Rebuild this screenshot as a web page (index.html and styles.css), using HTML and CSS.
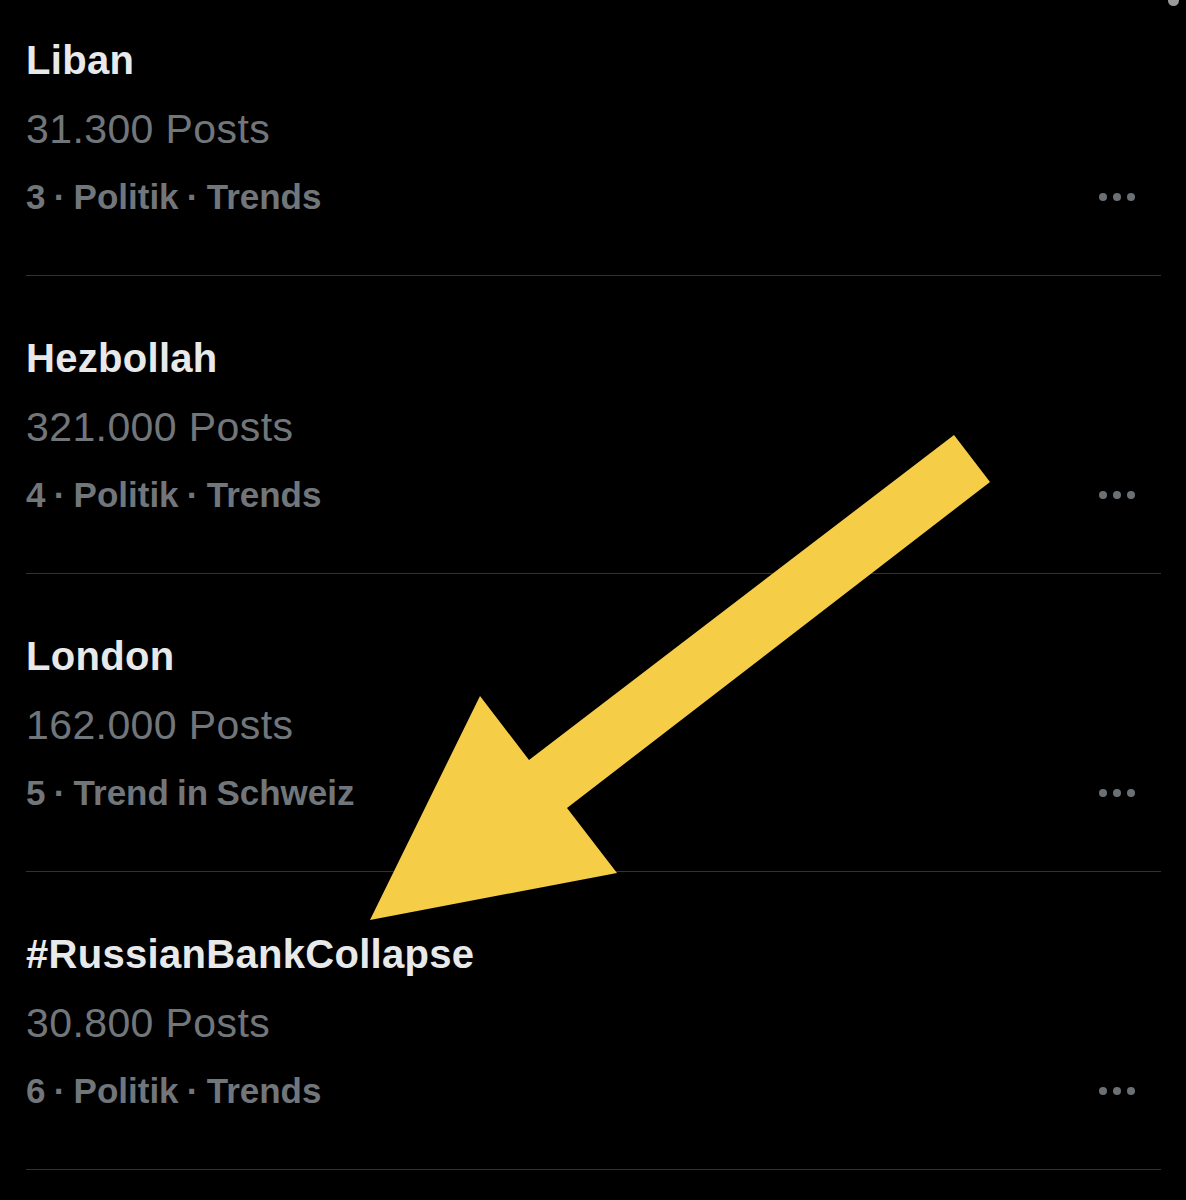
FILE: index.html
```html
<!DOCTYPE html>
<html lang="de">
<head>
<meta charset="utf-8">
<title>Trends</title>
<link rel="stylesheet" href="styles.css">
</head>
<body>
<div class="page">
  <ul class="trends">
    <li class="trend">
      <div class="title">Liban</div>
      <div class="posts">31.300 Posts</div>
      <div class="meta"><span>3 · Politik · Trends</span><span class="more"><i></i><i></i><i></i></span></div>
    </li>
    <li class="trend">
      <div class="title">Hezbollah</div>
      <div class="posts">321.000 Posts</div>
      <div class="meta"><span>4 · Politik · Trends</span><span class="more"><i></i><i></i><i></i></span></div>
    </li>
    <li class="trend">
      <div class="title">London</div>
      <div class="posts">162.000 Posts</div>
      <div class="meta"><span>5 · Trend in Schweiz</span><span class="more"><i></i><i></i><i></i></span></div>
    </li>
    <li class="trend">
      <div class="title">#RussianBankCollapse</div>
      <div class="posts">30.800 Posts</div>
      <div class="meta"><span>6 · Politik · Trends</span><span class="more"><i></i><i></i><i></i></span></div>
    </li>
  </ul>
  <span class="scroll-dot"></span>
  <svg class="arrow" width="1186" height="1200" viewBox="0 0 1186 1200" aria-hidden="true">
    <polygon points="954,435 990,482 567,808 617,873 370,920 480,696 529,760" fill="#f5cd47"/>
  </svg>
</div>
</body>
</html>
```
FILE: styles.css
```css
html, body {
  margin: 0;
  padding: 0;
  background: #000;
}
body {
  font-family: "Liberation Sans", Arial, sans-serif;
  overflow: hidden;
}
.page {
  position: relative;
  width: 1186px;
  height: 1200px;
  overflow: hidden;
}
.trends {
  list-style: none;
  margin: -22px 0 0 0;
  padding: 0 25px 0 26px;
}
.trend {
  padding: 48px 0 44px 0;
  border-bottom: 1px solid #2f3336;
}
.title {
  font-size: 40px;
  line-height: 68px;
  font-weight: 700;
  color: #e7e9ea;
  white-space: nowrap;
  letter-spacing: 0.3px;
}
.posts {
  font-size: 41px;
  line-height: 68px;
  font-weight: 400;
  color: #71767b;
  letter-spacing: 0.4px;
  margin-top: 1px;
}
.meta {
  font-size: 35px;
  line-height: 68px;
  font-weight: 700;
  color: #71767b;
  display: flex;
  justify-content: space-between;
  align-items: center;
  word-spacing: -1.5px;
}
.more {
  display: flex;
  gap: 6px;
  margin-right: 26px;
}
.more i {
  display: block;
  width: 8px;
  height: 8px;
  border-radius: 50%;
  background: #6b7075;
}
.scroll-dot {
  position: absolute;
  top: -5px;
  left: 1168px;
  width: 11px;
  height: 11px;
  border-radius: 50%;
  background: #9a9a9a;
}
.arrow {
  position: absolute;
  left: 0;
  top: 0;
}
```
